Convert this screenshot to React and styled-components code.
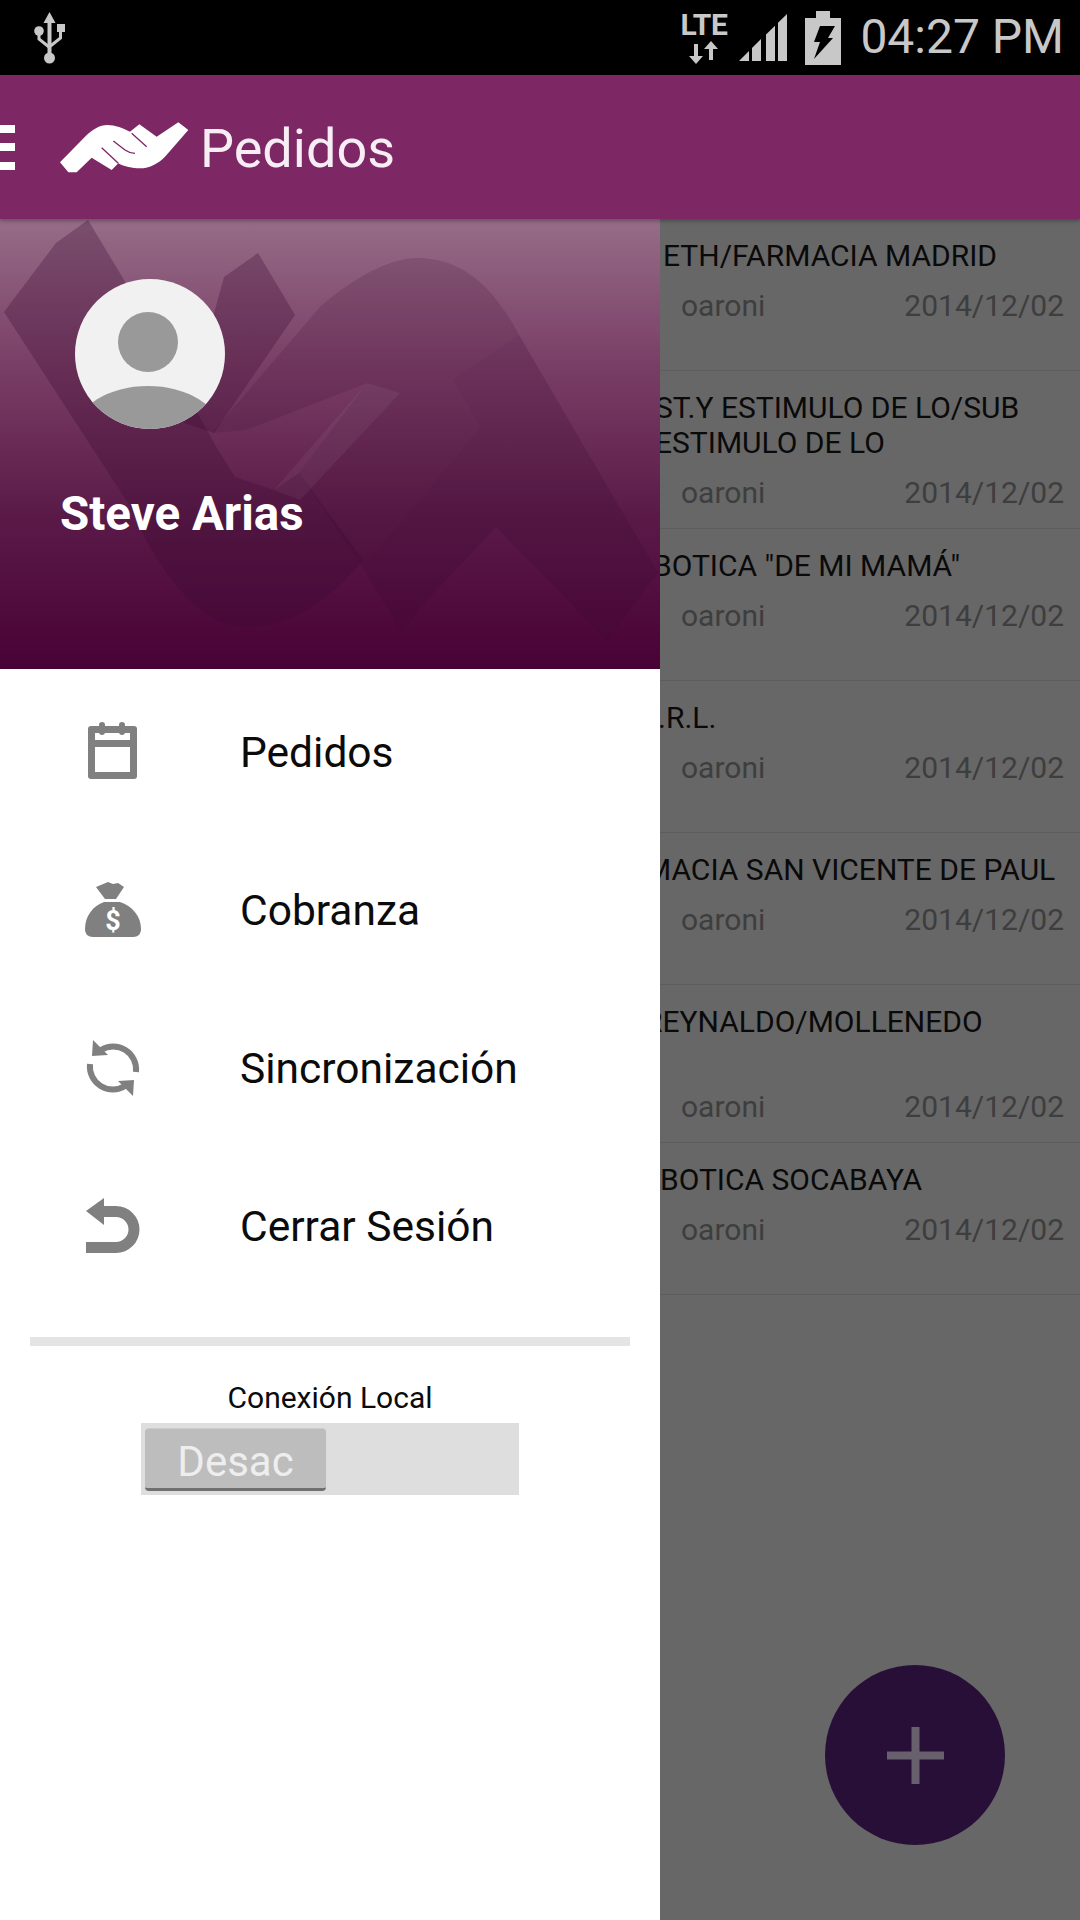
import React from "react";
import styled, { createGlobalStyle } from "styled-components";

const GlobalStyle = createGlobalStyle`
  html, body {
    margin: 0;
    padding: 0;
    background: #000;
  }
  * {
    box-sizing: border-box;
  }
`;

const Screen = styled.div`
  width: 1080px;
  height: 1920px;
  display: flex;
  flex-direction: column;
  overflow: hidden;
  font-family: "Roboto", "Liberation Sans", sans-serif;
`;

const StatusBar = styled.div`
  height: 75px;
  flex: none;
  background: #000;
  display: flex;
  align-items: center;
  justify-content: space-between;
  padding: 0 16px 0 34px;
  color: #c8c8c8;
`;
const StatusRight = styled.div`
  display: flex;
  align-items: center;
`;
const NetworkStack = styled.div`
  width: 47px;
  height: 52px;
  display: flex;
  flex-direction: column;
  align-items: center;
  margin: 0 12px 0 0;
`;
const NetworkLabel = styled.div`
  font-size: 30px;
  font-weight: 700;
  line-height: 26px;
  letter-spacing: -0.5px;
  height: 29px;
`;
const Time = styled.div`
  font-size: 48px;
  font-weight: 400;
  line-height: 73px;
  height: 75px;
  margin-left: 19px;
`;

const AppBar = styled.div`
  height: 144px;
  flex: none;
  position: relative;
  z-index: 2;
  background: #7d2865;
  box-shadow: 0 2px 4px rgba(0, 0, 0, 0.3);
  display: flex;
  align-items: center;
`;
const Burger = styled.div`
  width: 15px;
  height: 45px;
  margin-right: 35px;
  display: flex;
  flex-direction: column;
  justify-content: space-between;
  span {
    display: block;
    height: 8px;
    background: #fff;
  }
`;
const AppTitle = styled.div`
  font-size: 54px;
  font-weight: 400;
  line-height: 64px;
  color: #f7edf4;
  margin: 4px 0 0 0;
`;

const Body = styled.div`
  flex: 1;
  display: flex;
  min-height: 0;
`;

const Drawer = styled.div`
  width: 660px;
  flex: none;
  background: #fff;
  display: flex;
  flex-direction: column;
`;
const DrawerHeader = styled.div`
  height: 450px;
  flex: none;
  position: relative;
  overflow: hidden;
  background: linear-gradient(180deg, #966d88 0%, #7a3f66 32%, #5a1a48 66%, #490235 100%);
  padding: 60px 0 0 60px;
`;
const Watermark = styled.svg`
  position: absolute;
  left: 0;
  top: 0;
  width: 660px;
  height: 450px;
`;
const AvatarWrap = styled.svg`
  position: relative;
  display: block;
  width: 150px;
  height: 150px;
  margin-left: 15px;
`;
const UserName = styled.div`
  position: relative;
  margin-top: 60px;
  font-size: 47.5px;
  font-weight: 700;
  line-height: 50px;
  color: #fff;
`;

const Menu = styled.div`
  padding-top: 4px;
`;
const MenuItem = styled.div`
  height: 158px;
  display: flex;
  align-items: center;
  padding-left: 83px;
  gap: 97px;
  font-size: 42.5px;
  color: #0b0b0b;
`;
const MenuIcon = styled.svg`
  width: 60px;
  height: 60px;
  flex: none;
  color: #808080;
`;
const Divider = styled.div`
  height: 9px;
  margin: 32px 30px 0;
  background: #e4e4e4;
`;
const SwitchLabel = styled.div`
  margin-top: 34px;
  font-size: 30px;
  line-height: 36px;
  text-align: center;
  color: #0b0b0b;
`;
const SwitchTrack = styled.div`
  width: 378px;
  height: 72px;
  margin: 7px auto 0;
  padding: 5px 4px;
  background: #dedede;
`;
const SwitchThumb = styled.div`
  width: 181px;
  height: 63px;
  border-radius: 4px;
  background: #bdbdbd;
  border-top: 1px solid #cbcbcb;
  border-bottom: 3px solid #6f6f6f;
  color: #eeeeee;
  font-size: 42px;
  line-height: 66px;
  text-align: center;
`;

const Pane = styled.div`
  flex: 1;
  position: relative;
  overflow: hidden;
  background: #676767;
`;
const OrderRow = styled.div`
  min-height: 152px;
  padding: 19px 16px 17px 0;
  border-bottom: 1px solid #5d5d5d;
`;
const OrderTitles = styled.div`
  min-height: ${(props) => (props.$tall ? "70px" : "35px")};
`;
const OrderTitle = styled.div`
  font-size: 30px;
  line-height: 35px;
  color: #0a0a0a;
  white-space: nowrap;
  margin-left: ${(props) => props.$offset || 0}px;
`;
const OrderMeta = styled.div`
  display: flex;
  justify-content: space-between;
  margin-top: 15px;
  padding-left: 21px;
  font-size: 30px;
  line-height: 36px;
  color: #3e3e3e;
`;
const Fab = styled.div`
  position: absolute;
  right: 75px;
  bottom: 75px;
  width: 180px;
  height: 180px;
  border-radius: 50%;
  background: #280f38;
  display: flex;
  align-items: center;
  justify-content: center;
`;

const orders = [
  { lines: [{ text: "ETH/FARMACIA MADRID", offset: 3 }] },
  {
    lines: [
      { text: "ST.Y ESTIMULO DE LO/SUB", offset: -5 },
      { text: "ESTIMULO DE LO", offset: -5 },
    ],
  },
  { lines: [{ text: 'BOTICA "DE MI MAMÁ"', offset: -7 }] },
  { lines: [{ text: ".R.L.", offset: -2 }] },
  { lines: [{ text: "MACIA SAN VICENTE DE PAUL", offset: -15 }] },
  { lines: [{ text: "REYNALDO/MOLLENEDO", offset: -16 }], tall: true },
  { lines: [{ text: "BOTICA SOCABAYA", offset: 0 }] },
];

const menuItems = [
  { label: "Pedidos", icon: "calendar" },
  { label: "Cobranza", icon: "bag" },
  { label: "Sincronización", icon: "sync" },
  { label: "Cerrar Sesión", icon: "undo" },
];

function UsbIcon() {
  return (
    <svg width="31" height="52" viewBox="34 11 31 52" fill="#c8c8c8">
      <path d="M49.5 11l6 11h-4v30h-4V22h-4z" />
      <circle cx="49.5" cy="57" r="5.5" />
      <circle cx="39" cy="30" r="4.8" />
      <rect x="57" y="23" width="8" height="8" />
      <path d="M39 30v8l10 8M60.5 30v7l-10 8" fill="none" stroke="#c8c8c8" strokeWidth="3" />
    </svg>
  );
}

function NetworkArrows() {
  return (
    <svg width="30" height="23" viewBox="0 0 30 23" fill="#c8c8c8">
      <path d="M5 3h4v12h5l-7 8-7-8h5z" />
      <path d="M22 0l7 8h-5v11h-4V8h-5z" />
    </svg>
  );
}

function SignalIcon() {
  return (
    <svg width="48" height="47" viewBox="741 13 48 47" fill="#c8c8c8">
      <polygon points="741,60 751,50 751,60" />
      <polygon points="754,60 754,47 763,38 763,60" />
      <polygon points="768,60 768,33.6 777,24.7 777,60" />
      <polygon points="780,60 780,21.8 789,13 789,60" />
    </svg>
  );
}

function BatteryIcon() {
  return (
    <svg width="36" height="54" viewBox="807 8 36 54" style={{ marginLeft: 18 }}>
      <path d="M818 8h14v7h11v47h-36V15h11z" fill="#c8c8c8" />
      <polygon points="822,23 837,23 830,35 835,35 816,56 822,39 816,39" fill="#000" />
    </svg>
  );
}

function HandsLogo() {
  return (
    <svg width="150" height="65" viewBox="0 0 450 195">
      <path
        d="M30 142L105 65C125 44 150 30 172 30C195 30 220 40 240 50L268 28L320 65L385 22L415 45L345 125C325 145 300 160 270 160C248 160 222 155 205 145L185 165L125 128L80 172H55Z"
        fill="#fff"
      />
      <path
        d="M155 98L205 145M190 78L225 105C235 112 245 115 255 115M245 55L290 95"
        fill="none"
        stroke="#7d2865"
        strokeWidth="4"
      />
    </svg>
  );
}

function HeaderWatermark() {
  return (
    <Watermark viewBox="0 219 660 450">
      <g fill="#3c0a32" fillOpacity="0.3">
        <path d="M88 220L56 243L4 312L128 503C160 575 200 627 248 627C290 627 330 600 363 560L299 473L274 490L235 477L218 450L124 280Z" />
        <path d="M258 253L295 315L214 433L184 423L224 277Z" />
      </g>
      <g fill="#3c0a32" fillOpacity="0.17">
        <path d="M212 433L320 307C345 285 385 258 417 258C465 258 495 290 519 335L453 380L427 363L367 383L246 430Z" />
        <path d="M367 383L427 363L453 380L481 427L363 568L299 473Z" />
      </g>
      <path d="M519 335L658 573L607 640L496 527L427 600L402 632L363 568L481 427L453 380Z" fill="#3c0a32" fillOpacity="0.22" />
      <path d="M367 383L400 393L300 500L274 490Z" fill="#fff" fillOpacity="0.05" />
    </Watermark>
  );
}

function Avatar() {
  return (
    <AvatarWrap viewBox="0 0 150 150">
      <defs>
        <clipPath id="avatarClip">
          <circle cx="75" cy="75" r="75" />
        </clipPath>
      </defs>
      <circle cx="75" cy="75" r="75" fill="#f1f1f1" />
      <circle cx="73" cy="63" r="30" fill="#999" />
      <ellipse cx="73" cy="152" rx="72" ry="45" fill="#999" clipPath="url(#avatarClip)" />
    </AvatarWrap>
  );
}

function DrawerIcon({ name }) {
  if (name === "calendar") {
    return (
      <MenuIcon viewBox="0 0 60 60">
        <rect x="5" y="4" width="49" height="53" rx="3" fill="currentColor" />
        <rect x="12" y="11" width="35" height="7" fill="#fff" />
        <rect x="12" y="25" width="35" height="25" fill="#fff" />
        <rect x="16" y="0" width="6" height="13" rx="3" fill="currentColor" />
        <rect x="36" y="0" width="6" height="13" rx="3" fill="currentColor" />
      </MenuIcon>
    );
  }
  if (name === "bag") {
    return (
      <MenuIcon viewBox="0 0 60 60">
        <path d="M13 7L25 2L30 4L35 3L41 7L33 19H22Z" fill="currentColor" />
        <path d="M21 22H37C49 26 58 36 58 49C58 54 55 57 50 57H10C5 57 2 54 2 49C2 36 10 26 21 22Z" fill="currentColor" />
        <text x="30" y="50" textAnchor="middle" fontFamily="Roboto, sans-serif" fontSize="27" fontWeight="700" fill="#fff">
          $
        </text>
      </MenuIcon>
    );
  }
  if (name === "sync") {
    const half = (
      <>
        <path d="M18 12A23 23 0 0 1 53 34" fill="none" stroke="currentColor" strokeWidth="6" />
        <polygon points="10,2 9,18 25,17" fill="currentColor" />
      </>
    );
    return (
      <MenuIcon viewBox="0 0 60 60">
        {half}
        <g transform="rotate(180 30 30)">{half}</g>
      </MenuIcon>
    );
  }
  return (
    <MenuIcon viewBox="0 0 60 60">
      <polygon points="3,15 21,2 21,29" fill="currentColor" />
      <path d="M21 10H33A23.5 23.5 0 0 1 33 57H3V46H33A12.5 12.5 0 0 0 33 21H21Z" fill="currentColor" />
    </MenuIcon>
  );
}

function App() {
  return (
    <>
      <GlobalStyle />
      <Screen>
        <StatusBar>
          <UsbIcon />
          <StatusRight>
            <NetworkStack>
              <NetworkLabel>LTE</NetworkLabel>
              <NetworkArrows />
            </NetworkStack>
            <SignalIcon />
            <BatteryIcon />
            <Time>04:27 PM</Time>
          </StatusRight>
        </StatusBar>
        <AppBar>
          <Burger>
            <span />
            <span />
            <span />
          </Burger>
          <HandsLogo />
          <AppTitle>Pedidos</AppTitle>
        </AppBar>
        <Body>
          <Drawer>
            <DrawerHeader>
              <HeaderWatermark />
              <Avatar />
              <UserName>Steve Arias</UserName>
            </DrawerHeader>
            <Menu>
              {menuItems.map((item) => (
                <MenuItem key={item.label}>
                  <DrawerIcon name={item.icon} />
                  {item.label}
                </MenuItem>
              ))}
            </Menu>
            <Divider />
            <SwitchLabel>Conexión Local</SwitchLabel>
            <SwitchTrack>
              <SwitchThumb>Desac</SwitchThumb>
            </SwitchTrack>
          </Drawer>
          <Pane>
            {orders.map((order, index) => (
              <OrderRow key={index}>
                <OrderTitles $tall={order.tall}>
                  {order.lines.map((line) => (
                    <OrderTitle key={line.text} $offset={line.offset}>
                      {line.text}
                    </OrderTitle>
                  ))}
                </OrderTitles>
                <OrderMeta>
                  <span>oaroni</span>
                  <span>2014/12/02</span>
                </OrderMeta>
              </OrderRow>
            ))}
            <Fab>
              <svg width="57" height="57" viewBox="0 0 57 57" fill="#68606c">
                <rect x="24.5" width="8" height="57" />
                <rect y="24.5" width="57" height="8" />
              </svg>
            </Fab>
          </Pane>
        </Body>
      </Screen>
    </>
  );
}

export default App;
